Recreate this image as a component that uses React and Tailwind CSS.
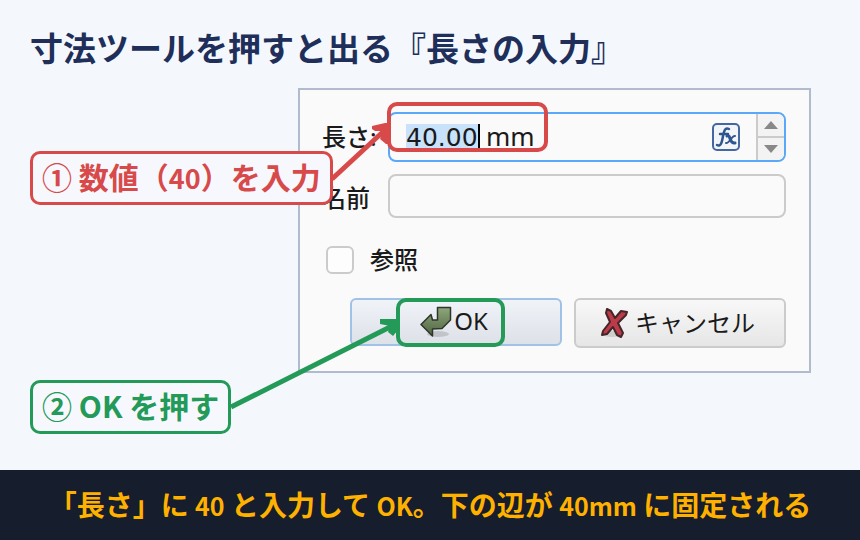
import { useState } from 'react';

const ROUND_JP = "font-['Noto_Sans_CJK_JP',sans-serif] font-bold";
const DIALOG_JP = "font-['Noto_Sans','Noto_Sans_CJK_JP',sans-serif]";

function OkIcon() {
  return (
    <svg viewBox="0 0 32 32" className="w-8 h-8 shrink-0" aria-hidden="true">
      <defs>
        <linearGradient id="okFill" x1="0" y1="0" x2="0" y2="1">
          <stop offset="0" stopColor="#8fa77c" />
          <stop offset="1" stopColor="#4f6341" />
        </linearGradient>
      </defs>
      <ellipse cx="18" cy="28" rx="11" ry="3" fill="#000" opacity="0.14" />
      <path d="M17.500 1.500H30.500V14L22 22.500L12.500 23V30L1 18.500L11 8.500L12.500 14H17.500Z" fill="url(#okFill)" stroke="#2f3629" strokeWidth="1.500" strokeLinejoin="round" />
    </svg>
  );
}

function CancelIcon() {
  return (
    <svg viewBox="0 0 28 30" className="w-7 h-[30px] shrink-0" aria-hidden="true">
      <ellipse cx="11" cy="26" rx="10" ry="3" fill="#000" opacity="0.12" />
      <path d="M6 1L10 3L14 10L20 3L26 4L25 7L17 15L22 25L20 29L16 27L12 19L6 26L1 27L2 23L9 14L5 5Z" fill="#bd3b48" stroke="#43262a" strokeWidth="2" strokeLinejoin="round" />
    </svg>
  );
}

function FxIcon() {
  return (
    <svg viewBox="0 0 28 28" className="w-7 h-7" aria-hidden="true">
      <rect x="1" y="1" width="26" height="26" rx="4" fill="#f2f4f7" stroke="#4467a2" strokeWidth="2" />
      <path d="M17 6C13 4 12 8 11 13C10 19 9 24 5 22M8 11H16" fill="none" stroke="#2f5590" strokeWidth="2.500" strokeLinecap="round" />
      <path d="M15 13C19 11 17 21 23 20" fill="none" stroke="#2f5590" strokeWidth="3" strokeLinecap="round" />
      <path d="M23 13C20 12 17 21 14 20" fill="none" stroke="#2f5590" strokeWidth="2" strokeLinecap="round" />
    </svg>
  );
}

function StepLabel({ className, children }) {
  return (
    <div className={`absolute left-[30px] rounded-[10px] border-[3px] bg-[#f6f8fe] px-[9px] pb-1 h-[54px] flex items-center text-[30px] leading-none whitespace-nowrap ${className}`}>
      <p>{children}</p>
    </div>
  );
}

function LengthDialog() {
  const [length, setLength] = useState('40.00');
  const [name, setName] = useState('');
  const [reference, setReference] = useState(false);

  return (
    <form onSubmit={e => e.preventDefault()} className={`ml-[298px] mr-[49px] border-2 border-[#b0bcce] bg-[#fafafa] pt-[22px] pb-[23px] pl-[22px] pr-[23px] text-[24px] leading-6 text-[#1a1a1a] ${DIALOG_JP}`}>
      {/* Length */}
      <div className="relative flex items-center">
        <label htmlFor="length" className="w-[66px] shrink-0 font-medium">長さ:</label>
        <div className="flex flex-1 min-w-0 h-[50px] items-center rounded-lg border-2 border-[#5ba7f8] pl-4">
          <input id="length" value={length} onChange={e => setLength(e.target.value)}
            className="w-[72px] h-[26px] bg-[#c8e2fc] p-0 font-['DejaVu_Sans',sans-serif] text-[25px] outline-none" />
          <span className="w-0.5 h-[26px] bg-black" />
          <span className="pl-1.5 pb-0.5 text-[26px]">mm</span>
          <button type="button" aria-label="Formula" className="ml-auto mr-4"><FxIcon /></button>
          <div className="flex flex-col self-stretch w-7 border-l-2 border-[#cbcbcb]">
            <button type="button" aria-label="Increase" className="flex-1 flex items-center justify-center rounded-tr-md border-b-2 border-[#cbcbcb] bg-[#f3f3f3]">
              <svg viewBox="0 0 14 8" className="w-3.5 h-2"><path d="M0 8L7 0L14 8Z" fill="#888" /></svg>
            </button>
            <button type="button" aria-label="Decrease" className="flex-1 flex items-center justify-center rounded-br-md bg-[#f3f3f3]">
              <svg viewBox="0 0 14 8" className="w-3.5 h-2"><path d="M0 0L7 8L14 0Z" fill="#888" /></svg>
            </button>
          </div>
        </div>
        <div className="absolute left-[65px] -top-2.5 w-[161px] h-[50px] rounded-[10px] border-4 border-[#d84a4a] pointer-events-none" />
      </div>

      {/* Name */}
      <div className="mt-3 flex items-center">
        <label htmlFor="name" className="w-[66px] pt-1 shrink-0 font-medium">名前</label>
        <input id="name" value={name} onChange={e => setName(e.target.value)}
          className="flex-1 min-w-0 h-11 rounded-lg border-2 border-[#cbcbcb] bg-transparent px-4 outline-none" />
      </div>

      {/* Reference */}
      <div className="mt-7 ml-1 flex items-center gap-4">
        <input id="reference" type="checkbox" checked={reference} onChange={e => setReference(e.target.checked)}
          className="appearance-none w-7 h-7 rounded-md border-2 border-[#cbcbcb] bg-[#fdfdfd] checked:bg-[#5ba7f8]" />
        <label htmlFor="reference" className="font-medium">参照</label>
      </div>

      {/* Buttons */}
      <div className="mt-6 ml-7 grid grid-cols-2 items-start gap-3">
        <div className="relative">
          <button type="submit" className="w-full h-12 flex items-center justify-center gap-0.5 pr-1 rounded-md border-2 border-[#a0c2e6] bg-linear-to-b from-[#f0f3f8] to-[#dde1e8]">
            <OkIcon /> <span className="pb-0.5">OK</span>
          </button>
          <div className="absolute left-[46px] top-0 w-[109px] h-[49px] rounded-[10px] border-4 border-[#249a58] pointer-events-none" />
        </div>
        <button type="button" className="h-[50px] flex items-center justify-center gap-1.5 pr-1 rounded-md border-2 border-[#cbcbcb] bg-linear-to-b from-[#f8f8f8] to-[#e6e6e6]">
          <CancelIcon /> キャンセル
        </button>
      </div>
    </form>
  );
}

function Arrows() {
  return (
    <svg viewBox="0 0 860 470" width="860" height="470" className="absolute left-0 top-0 pointer-events-none" aria-hidden="true">
      <path d="M332 179L386 129" stroke="#d84a4a" strokeWidth="5" />
      <path d="M372 126L385 123H390V144H386L380 139L383 131L375 131L372 129Z" fill="#d84a4a" />
      <path d="M231 407L392 326" stroke="#249a58" strokeWidth="5" />
      <path d="M380 319H398V330L393 336L388 332L390 326L380 324Z" fill="#249a58" />
    </svg>
  );
}

export default function App() {
  return (
    <div className="min-h-screen flex flex-col bg-[#f4f8fd]">
      <main className="relative flex-1">
        <h1 className={`pt-[31px] pl-[30px] pb-6 text-[33px] leading-[33px] text-[#202f5a] ${ROUND_JP}`}>
          寸法ツールを押すと出る『長さの入力』
        </h1>
        <LengthDialog />
        <StepLabel className={`top-[151px] border-[#d84a4a] text-[#d84a4a] ${ROUND_JP}`}>
          ① 数値（<span className="text-[27px]">40</span>）を入力
        </StepLabel>
        <StepLabel className={`top-[380px] border-[#249a58] text-[#249a58] ${ROUND_JP}`}>② OK を押す</StepLabel>
        <Arrows />
      </main>
      <footer className={`bg-[#161d2c] pt-5 pb-[22px] text-center text-[28px] leading-7 text-[#ffb100] ${ROUND_JP}`}>
        「長さ」に <span className="text-[25px] leading-none">40</span> と入力して <span className="text-[25px] leading-none">OK</span>。下の辺が <span className="text-[25px] leading-none">40mm</span> に固定される
      </footer>
    </div>
  );
}
